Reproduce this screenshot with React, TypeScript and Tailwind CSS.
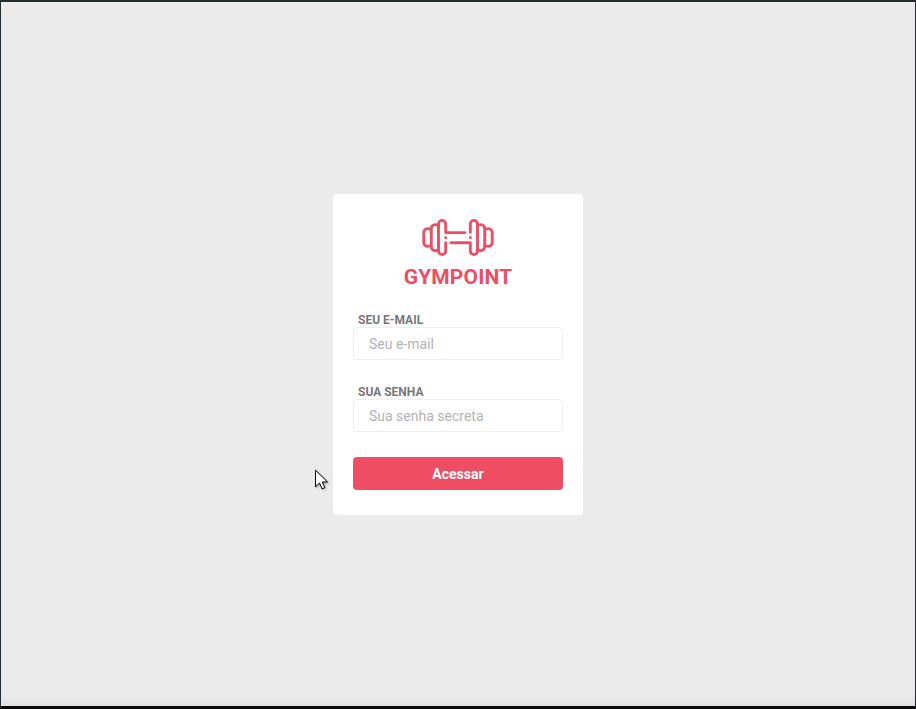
import React from 'react';

function Logo() {
  return (
    <svg width="72" height="38" viewBox="0 0 72 38" fill="none" stroke="#ee4d64" strokeWidth="2.9" strokeLinecap="round" strokeLinejoin="round">
      <path d="M8.6 10.2Q7.4 9.6 5.6 9.6A3.8 3.8 0 0 0 1.8 13.4V23.6A3.8 3.8 0 0 0 5.6 27.4Q7.4 27.4 8.6 26.8" />
      <path d="M16.2 6.2Q15 5.6 13.2 5.6A3.9 3.9 0 0 0 9.3 9.5V27.7A3.9 3.9 0 0 0 13.2 31.6Q15 31.6 16.2 31" />
      <path d="M43 13.6H23.7V5A3.6 3.6 0 0 0 16.5 5V32A3.6 3.6 0 0 0 23.7 32V23.8" />
      <path d="M63.4 10.2Q64.6 9.6 66.4 9.6A3.8 3.8 0 0 1 70.2 13.4V23.6A3.8 3.8 0 0 1 66.4 27.4Q64.6 27.4 63.4 26.8" />
      <path d="M55.8 6.2Q57 5.6 58.8 5.6A3.9 3.9 0 0 1 62.7 9.5V27.7A3.9 3.9 0 0 1 58.8 31.6Q57 31.6 55.8 31" />
      <path d="M29 23.8H48.3V32A3.6 3.6 0 0 0 55.5 32V5A3.6 3.6 0 0 0 48.3 5V13.4" />
      <path d="M23.7 18.7H23.71M48.3 18.5H48.31" strokeWidth="3" />
    </svg>
  );
}

function Field({ label, placeholder, type }: { label: string; placeholder: string; type: string }) {
  return (
    <label className="flex flex-col">
      <span className="h-[15px] pl-[5px] text-[12px] leading-[17px] font-bold text-[#777]">{label}</span>
      <input
        type={type}
        placeholder={placeholder}
        className="h-[33px] w-full rounded-[4px] border border-[#eee] bg-white px-[15px] pt-[2px] text-[14px] outline-none placeholder:text-[#b3b3b3]"
      />
    </label>
  );
}

export default function App() {
  return (
    <div className="relative flex h-[709px] w-[916px] flex-col items-center justify-center border-x border-t-2 border-b-[3px] border-x-[#253036] border-t-[#222d32] border-b-[#080808] bg-[#ebebeb] font-['Roboto',sans-serif]">
      <main className="flex h-[321px] w-[250px] flex-col rounded-[4px] bg-white px-5">
        <div className="flex flex-col items-center pt-[25px]">
          <Logo />
          <h1 className="mt-[5px] h-[30px] text-[21px] leading-[31px] font-bold tracking-[0.12px] text-[#ee4d64]">GYMPOINT</h1>
        </div>
        <form className="flex flex-col pt-[20px]">
          <Field label="SEU E-MAIL" placeholder="Seu e-mail" type="email" />
          <div className="h-6" />
          <Field label="SUA SENHA" placeholder="Sua senha secreta" type="password" />
          <button type="button" className="mt-[25px] h-[33px] rounded-[4px] bg-[#ee4d64] pt-[2px] text-[14px] font-bold text-white">
            Acessar
          </button>
        </form>
      </main>
      <svg className="absolute top-[467px] left-[314px] drop-shadow-[1px_1px_1px_rgba(0,0,0,0.3)]" width="14" height="21" viewBox="0 0 14 21">
        <path d="M.5 1.2V17.8L4.5 14L7 19.8L9.8 18.6L7.3 13H12.5Z" fill="#fff" stroke="#000" />
      </svg>
      <div className="absolute bottom-0 left-0 h-3 w-full bg-linear-to-b from-transparent to-black/5" />
    </div>
  );
}
